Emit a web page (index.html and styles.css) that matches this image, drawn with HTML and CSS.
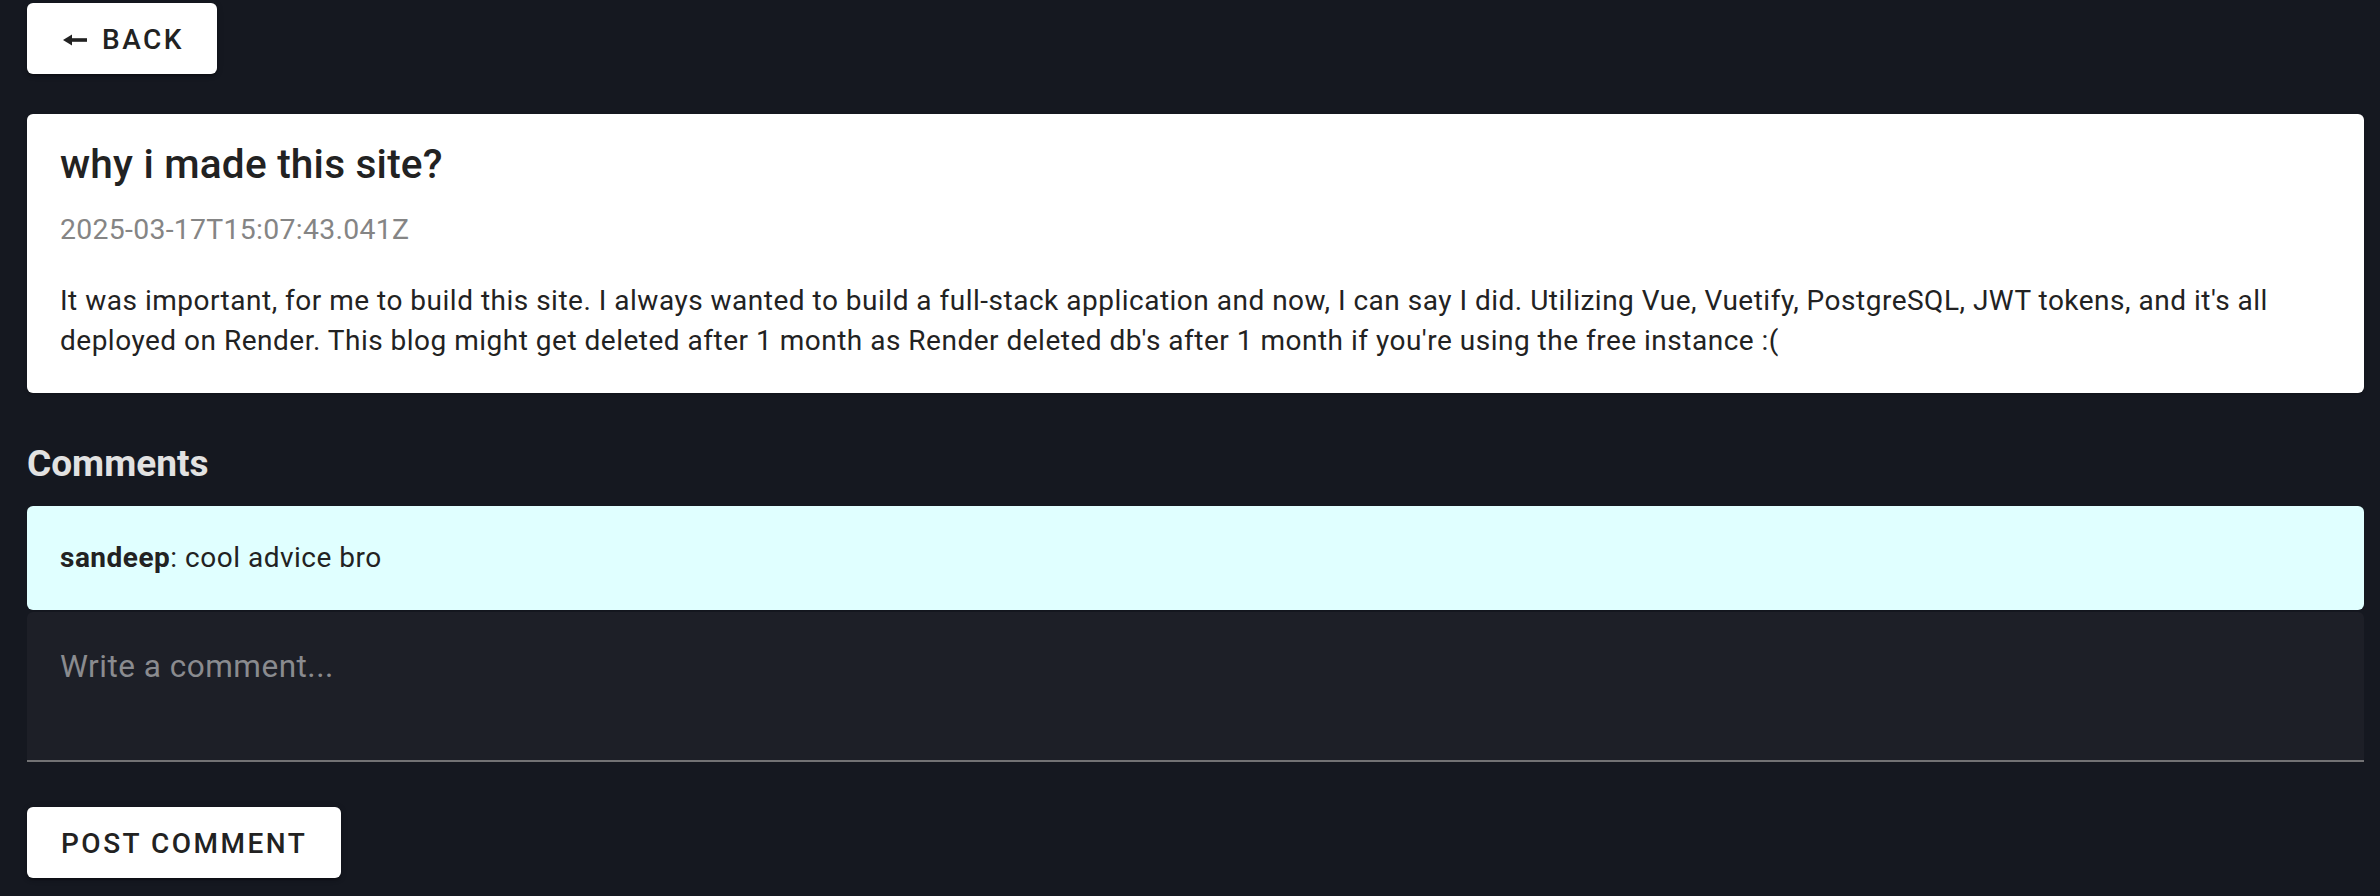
FILE: index.html
```html
<!DOCTYPE html>
<html lang="en">
<head>
<meta charset="utf-8">
<title>why i made this site?</title>
<link rel="stylesheet" href="styles.css">
</head>
<body>
<main class="page">
  <div class="top-row">
    <button class="btn btn-back" type="button">
      <svg class="arrow" width="24" height="12" viewBox="0 0 24 12" aria-hidden="true">
        <polygon points="0,6 9,0.5 9,11.5" fill="#222"/>
        <rect x="8" y="4.2" width="16" height="3.6" fill="#222"/>
      </svg>
      <span>Back</span>
    </button>
  </div>

  <article class="post-card">
    <h1 class="post-title">why i made this site?</h1>
    <div class="post-date">2025-03-17T15:07:43.041Z</div>
    <p class="post-body">It was important, for me to build this site. I always wanted to build a full-stack application and now, I can say I did. Utilizing Vue, Vuetify, PostgreSQL, JWT tokens, and it's all deployed on Render. This blog might get deleted after 1 month as Render deleted db's after 1 month if you're using the free instance :(</p>
  </article>

  <h2 class="comments-heading">Comments</h2>

  <div class="comment-card">
    <strong>sandeep</strong>: cool advice bro
  </div>

  <div class="field">
    <textarea class="field-input" placeholder="Write a comment..."></textarea>
  </div>

  <div class="actions">
    <button class="btn btn-post" type="button">Post Comment</button>
  </div>
</main>
</body>
</html>
```

FILE: styles.css
```css
html, body {
  margin: 0;
  padding: 0;
  background: #151820;
}

body {
  font-family: Roboto, "Noto Sans", "Liberation Sans", sans-serif;
  color: #222222;
}

.page {
  padding: 3px 16px 20px 27px;
  display: flex;
  flex-direction: column;
}

.top-row {
  display: flex;
}

.btn {
  display: inline-flex;
  align-items: center;
  justify-content: center;
  height: 71px;
  padding: 0 34px;
  border: none;
  border-radius: 6px;
  background: #ffffff;
  color: #222222;
  font-family: Roboto, "Noto Sans", "Liberation Sans", sans-serif;
  font-size: 28px;
  font-weight: 500;
  letter-spacing: 2.5px;
  text-transform: uppercase;
  box-shadow: 0 3px 2px -2px rgba(0,0,0,0.25), 0 2px 3px 0 rgba(0,0,0,0.16), 0 1px 7px 0 rgba(0,0,0,0.14);
  cursor: pointer;
}

.btn-back {
  padding: 2px 33px 0 36px;
}

.arrow {
  margin-right: 15px;
  flex: none;
}

.post-card {
  margin-top: 40px;
  background: #ffffff;
  border-radius: 6px;
  padding: 25px 33px 32px 33px;
  box-shadow: 0 2px 2px -2px rgba(0,0,0,0.2), 0 1px 4px 0 rgba(0,0,0,0.14);
}

.post-title {
  margin: 0;
  font-size: 40.6px;
  line-height: 50px;
  font-weight: 500;
  letter-spacing: 0.2px;
  color: #222222;
}

.post-date {
  margin-top: 21px;
  font-size: 28.4px;
  line-height: 40px;
  color: #858585;
  letter-spacing: 0.3px;
}

.post-body {
  margin: 31px 0 0 0;
  font-size: 28px;
  line-height: 40px;
  letter-spacing: 0.5px;
  color: #222222;
}

.comments-heading {
  margin: 45px 0 0 0;
  font-size: 37px;
  line-height: 52px;
  font-weight: 700;
  color: #e2e2e2;
}

.comment-card {
  margin-top: 16px;
  background: #e0ffff;
  border-radius: 6px;
  padding: 32px 33px;
  font-size: 28px;
  line-height: 40px;
  letter-spacing: 0.5px;
  color: #222222;
  box-shadow: 0 2px 2px -2px rgba(0,0,0,0.2);
}

.comment-card strong {
  font-weight: 700;
}

.field {
  margin-top: 2px;
  display: flex;
  background: #1d1f27;
  border-radius: 6px 6px 0 0;
  border-bottom: 2px solid #727274;
}

.field-input {
  flex: 1;
  height: 148px;
  box-sizing: border-box;
  padding: 34px 33px 0 33px;
  border: none;
  outline: none;
  resize: none;
  background: transparent;
  color: #e6e6e6;
  font-family: Roboto, "Noto Sans", "Liberation Sans", sans-serif;
  font-size: 31.5px;
  line-height: 42px;
  letter-spacing: 0.5px;
}

.field-input::placeholder {
  color: #8a8b8f;
  opacity: 1;
}

.actions {
  margin-top: 45px;
  display: flex;
}

.btn-post {
  padding-top: 2px;
}
```
